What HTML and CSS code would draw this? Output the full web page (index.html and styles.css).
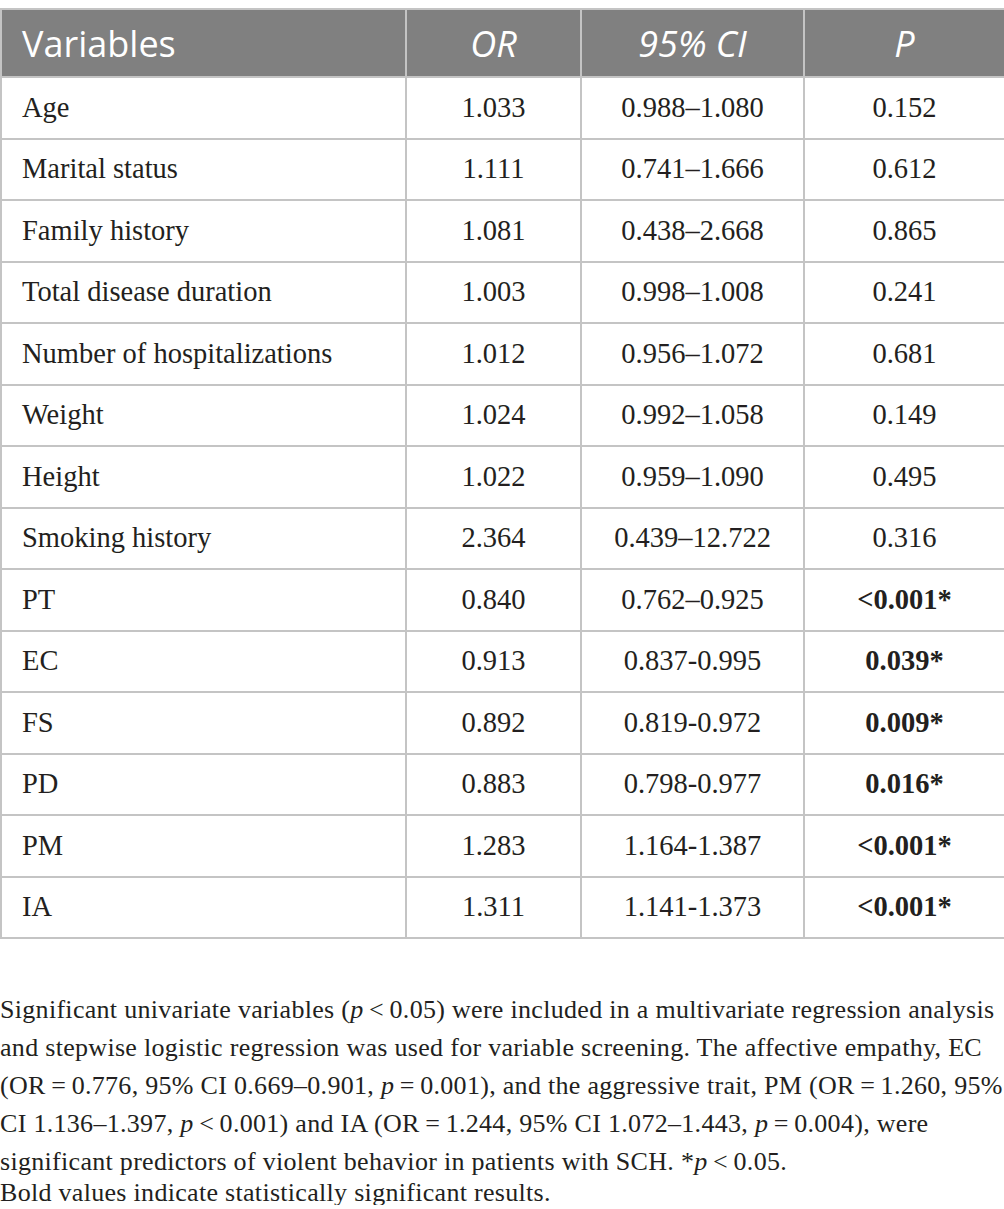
FILE: index.html
```html
<!DOCTYPE html>
<html lang="en">
<head>
<meta charset="utf-8">
<title>Table</title>
<link rel="stylesheet" href="styles.css">
</head>
<body>
<table class="data">
  <colgroup>
    <col class="c-var">
    <col class="c-or">
    <col class="c-ci">
    <col class="c-p">
  </colgroup>
  <thead>
    <tr>
      <th class="left">Variables</th>
      <th><i>OR</i></th>
      <th><i>95% CI</i></th>
      <th><i>P</i></th>
    </tr>
  </thead>
  <tbody>
    <tr><td class="left">Age</td><td>1.033</td><td>0.988–1.080</td><td>0.152</td></tr>
    <tr><td class="left">Marital status</td><td>1.111</td><td>0.741–1.666</td><td>0.612</td></tr>
    <tr><td class="left">Family history</td><td>1.081</td><td>0.438–2.668</td><td>0.865</td></tr>
    <tr><td class="left">Total disease duration</td><td>1.003</td><td>0.998–1.008</td><td>0.241</td></tr>
    <tr><td class="left">Number of hospitalizations</td><td>1.012</td><td>0.956–1.072</td><td>0.681</td></tr>
    <tr><td class="left">Weight</td><td>1.024</td><td>0.992–1.058</td><td>0.149</td></tr>
    <tr><td class="left">Height</td><td>1.022</td><td>0.959–1.090</td><td>0.495</td></tr>
    <tr><td class="left">Smoking history</td><td>2.364</td><td>0.439–12.722</td><td>0.316</td></tr>
    <tr><td class="left">PT</td><td>0.840</td><td>0.762–0.925</td><td class="sig">&lt;0.001*</td></tr>
    <tr><td class="left">EC</td><td>0.913</td><td>0.837-0.995</td><td class="sig">0.039*</td></tr>
    <tr><td class="left">FS</td><td>0.892</td><td>0.819-0.972</td><td class="sig">0.009*</td></tr>
    <tr><td class="left">PD</td><td>0.883</td><td>0.798-0.977</td><td class="sig">0.016*</td></tr>
    <tr><td class="left">PM</td><td>1.283</td><td>1.164-1.387</td><td class="sig">&lt;0.001*</td></tr>
    <tr><td class="left">IA</td><td>1.311</td><td>1.141-1.373</td><td class="sig">&lt;0.001*</td></tr>
  </tbody>
</table>
<div class="notes">
  <p class="note">Significant univariate variables (<i>p</i>&#8239;&lt;&#8239;0.05) were included in a multivariate regression analysis and stepwise logistic regression was used for variable screening. The affective empathy, EC (OR&#8239;=&#8239;0.776, 95% CI 0.669–0.901, <i>p</i>&#8239;=&#8239;0.001), and the aggressive trait, PM (OR&#8239;=&#8239;1.260, 95% CI 1.136–1.397, <i>p</i>&#8239;&lt;&#8239;0.001) and IA (OR&#8239;=&#8239;1.244, 95% CI 1.072–1.443, <i>p</i>&#8239;=&#8239;0.004), were significant predictors of violent behavior in patients with SCH. *<i>p</i>&#8239;&lt;&#8239;0.05.</p>
  <p class="note note-last">Bold values indicate statistically significant results.</p>
</div>
</body>
</html>
```

FILE: styles.css
```css
html, body {
  background: #ffffff;
}
body {
  margin: 8px 0 0 0;
  color: #231f20;
  font-family: "Liberation Serif", "Times New Roman", serif;
}
.data {
  width: 1004px;
  border-collapse: collapse;
  table-layout: fixed;
}
.c-var { width: 405px; }
.c-or { width: 175px; }
.c-ci { width: 223px; }
.c-p { width: 201px; }

.data th,
.data td {
  border: 2px solid #c4c4c4;
  text-align: center;
  vertical-align: middle;
  padding: 0 20px;
  white-space: nowrap;
}
.data th {
  height: 68px;
  box-sizing: border-box;
  background: #808080;
  color: #ffffff;
  font-family: "Open Sans", "Noto Sans", sans-serif;
  font-weight: 400;
  font-size: 36px;
}
.data th i { font-style: italic; }
.data td {
  height: 61.5px;
  box-sizing: border-box;
  font-size: 28.5px;
}
.data .left {
  text-align: left;
  padding-left: 20px;
}
.data td.sig {
  font-weight: 700;
}
.notes {
  margin-top: 52px;
  font-size: 26px;
  letter-spacing: 0.3px;
}
.note {
  margin: 0;
  line-height: 38px;
}
.note-last {
  line-height: 24px;
  margin-top: 0;
}
```
